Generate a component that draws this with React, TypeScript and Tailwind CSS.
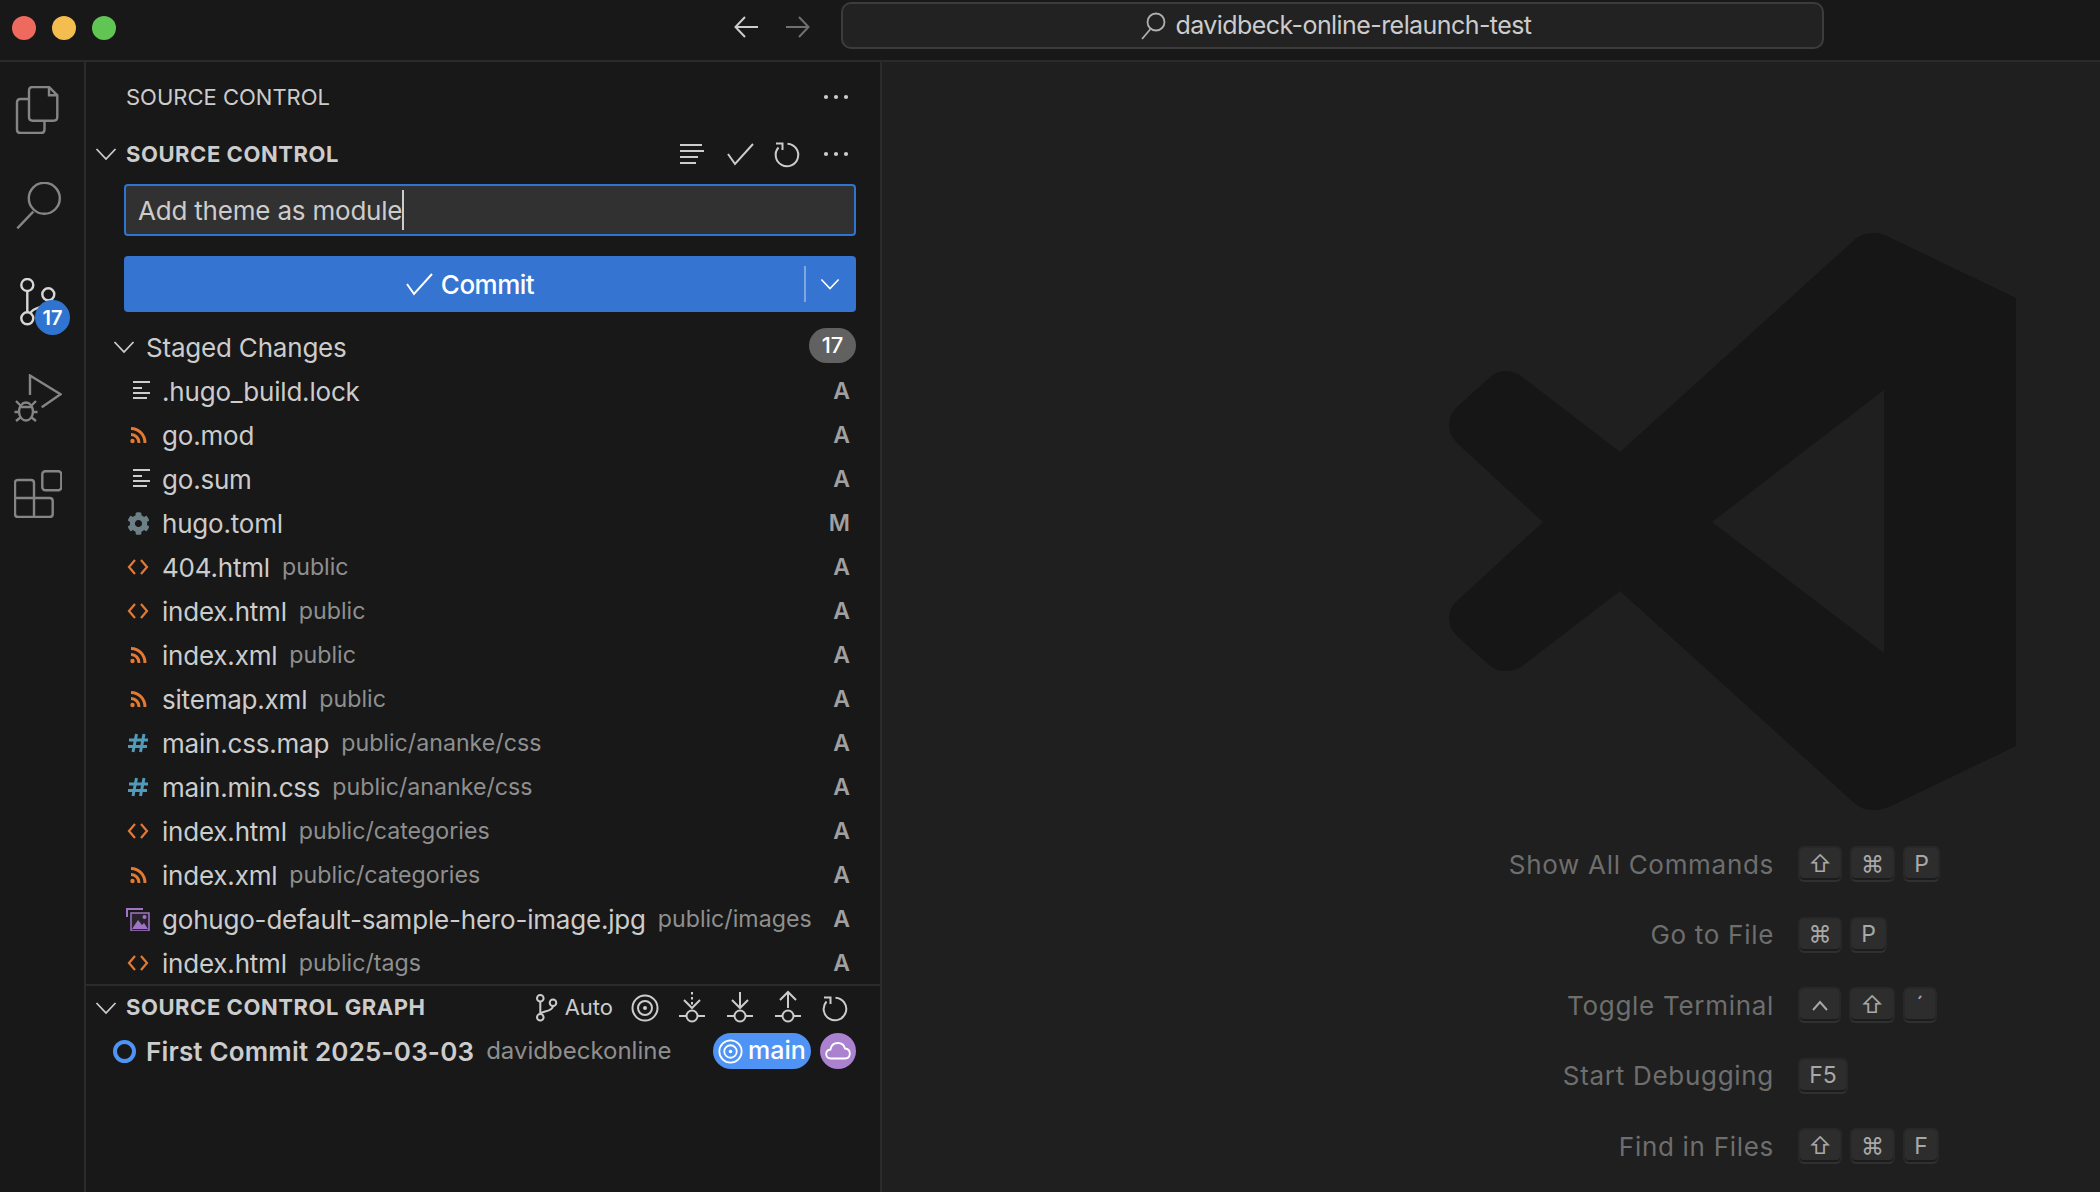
import { FaCog } from "react-icons/fa";

type Kind = "doc" | "rss" | "gear" | "code" | "hash" | "image";

const files: { name: string; dir?: string; kind: Kind; status: string }[] = [
  { name: ".hugo_build.lock", kind: "doc", status: "A" },
  { name: "go.mod", kind: "rss", status: "A" },
  { name: "go.sum", kind: "doc", status: "A" },
  { name: "hugo.toml", kind: "gear", status: "M" },
  { name: "404.html", dir: "public", kind: "code", status: "A" },
  { name: "index.html", dir: "public", kind: "code", status: "A" },
  { name: "index.xml", dir: "public", kind: "rss", status: "A" },
  { name: "sitemap.xml", dir: "public", kind: "rss", status: "A" },
  { name: "main.css.map", dir: "public/ananke/css", kind: "hash", status: "A" },
  { name: "main.min.css", dir: "public/ananke/css", kind: "hash", status: "A" },
  { name: "index.html", dir: "public/categories", kind: "code", status: "A" },
  { name: "index.xml", dir: "public/categories", kind: "rss", status: "A" },
  { name: "gohugo-default-sample-hero-image.jpg", dir: "public/images", kind: "image", status: "A" },
  { name: "index.html", dir: "public/tags", kind: "code", status: "A" },
];

const shortcuts = [
  { label: "Show All Commands", keys: [["⇧", "w-[44px]"], ["⌘", "w-[45px]"], ["P", "w-[37px]"]] },
  { label: "Go to File", keys: [["⌘", "w-[44px]"], ["P", "w-[37px]"]] },
  { label: "Toggle Terminal", keys: [["⌃", "w-[43px]"], ["⇧", "w-[46px]"], ["´", "w-[34px]"]] },
  { label: "Start Debugging", keys: [["F5", "w-[50px]"]] },
  { label: "Find in Files", keys: [["⇧", "w-[44px]"], ["⌘", "w-[45px]"], ["F", "w-[36px]"]] },
];

function FileIcon({ kind }: { kind: Kind }) {
  if (kind === "gear") return <FaCog className="w-[23px] h-[23px] text-[#6d8086]" />;
  if (kind === "doc")
    return (
      <svg width="24" height="24" viewBox="0 0 24 24" stroke="#cccccc" strokeWidth="2">
        <path d="M7 3h17M7 9h9M7 14h17M7 19h14" />
      </svg>
    );
  if (kind === "rss")
    return (
      <svg width="24" height="24" viewBox="0 0 24 24" fill="none" stroke="#e37933" strokeWidth="3">
        <circle cx="6.5" cy="18" r="2.2" fill="#e37933" stroke="none" />
        <path d="M5 11.5c4.5 0 8 3.5 8 8.5M5 5.5c8 0 14 6.5 14 14.500" />
      </svg>
    );
  if (kind === "code")
    return (
      <svg width="24" height="24" viewBox="0 0 24 24" fill="none" stroke="#e37933" strokeWidth="2.2">
        <path d="M9 5l-6 7 6 7M15 5l6 7-6 7" />
      </svg>
    );
  if (kind === "hash")
    return (
      <svg width="24" height="24" viewBox="0 0 24 24" fill="none" stroke="#519aba" strokeWidth="3">
        <path d="M10.500 3L7 21M18 3l-3.500 18M3 9h19M2 15.500h19" />
      </svg>
    );
  return (
    <svg width="24" height="24" viewBox="0 0 24 24" fill="none">
      <path d="M1 10V2h16" stroke="#a074c4" strokeWidth="2" />
      <path d="M5 6h18v18H5z" fill="#a074c4" fillOpacity="0.12" stroke="#a074c4" strokeWidth="1.500" />
      <circle cx="18.500" cy="10" r="2" fill="#a074c4" />
      <path d="M6 22l6-9 4 5 2-2 4 6z" fill="#a074c4" />
    </svg>
  );
}

function Chevron({ className }: { className: string }) {
  return (
    <svg className={className} width="22" height="14" viewBox="0 0 22 14" fill="none" stroke="currentColor" strokeWidth="1.800">
      <path d="M1.500 2l9.500 10 9.500-10" />
    </svg>
  );
}

function Dots() {
  return (
    <svg width="32" height="8" viewBox="0 0 32 8" fill="#cccccc">
      <circle cx="6" cy="4" r="2.100" />
      <circle cx="16" cy="4" r="2.100" />
      <circle cx="26" cy="4" r="2.100" />
    </svg>
  );
}

function Refresh() {
  return (
    <svg width="30" height="30" viewBox="0 0 30 30" fill="none" stroke="#cccccc" strokeWidth="2">
      <path d="M15.500 4.700A11.300 11.300 0 1 1 6.500 8.500" />
      <path d="M4 4.500h6.500V11" />
    </svg>
  );
}

function Target({ size }: { size: number }) {
  return (
    <svg width={size} height={size} viewBox="0 0 28 28" fill="none" stroke="currentColor" strokeWidth="2">
      <circle cx="14" cy="14" r="12.500" />
      <circle cx="14" cy="14" r="7" />
      <circle cx="14" cy="14" r="2" fill="currentColor" stroke="none" />
    </svg>
  );
}

function SyncIcon({ dir }: { dir: "fetch" | "pull" | "push" }) {
  return (
    <svg width="32" height="36" viewBox="0 0 32 36" fill="none" stroke="#cccccc" strokeWidth="2">
      <circle cx="16" cy="26" r="5.500" />
      <path d="M3 26h7.500M21.500 26H29" />
      {dir === "fetch" && <path d="M16 2v14" strokeDasharray="2.500 2.500" />}
      {dir === "pull" && <path d="M16 2v16" />}
      {dir === "push" && <path d="M16 2v16" />}
      {dir === "push" ? <path d="M8 10l8-8 8 8" /> : <path d="M8 10l8 8 8-8" />}
    </svg>
  );
}

function ActivityBar() {
  const iconClass = "w-[48px] h-[48px]";
  return (
    <div className="w-[86px] shrink-0 border-r-2 border-[#2b2b2b] pl-[14px] pt-[24px] flex flex-col gap-[48px]">
      <svg className={iconClass} viewBox="0 0 48 48" fill="none" stroke="#858585" strokeWidth="2.400">
        <path d="M18.500 1H35l8.300 8.300V31q0 3.700-3.700 3.700H18.700q-3.700 0-3.700-3.700V4.700Q15 1 18.500 1z" />
        <path d="M35 1v8.300h8.300" />
        <path d="M15 13H6.500Q3 13 3 16.500V43.500Q3 47 6.500 47H27q3.500 0 3.500-3.500V35" />
      </svg>
      <svg className={iconClass} viewBox="0 0 48 48" fill="none" stroke="#858585" strokeWidth="2.400">
        <circle cx="30.300" cy="16.300" r="15.500" />
        <path d="M19.300 29.700L3.300 46.300" />
      </svg>
      <div className="relative w-[48px] h-[48px]">
        <svg className={iconClass} viewBox="0 0 48 48" fill="none" stroke="#d7d7d7" strokeWidth="2.400">
          <circle cx="13.300" cy="7" r="6" />
          <circle cx="13.300" cy="40.300" r="6" />
          <circle cx="34.300" cy="16.300" r="6" />
          <path d="M13.300 13v21M34.300 22.500c0 8-15 5-18 13" />
        </svg>
        <span className="absolute left-[21px] top-[22px] w-[35px] h-[35px] rounded-full bg-[#2f74d0] flex items-center justify-center text-white text-[20px] font-semibold">
          17
        </span>
      </div>
      <svg className={iconClass} viewBox="0 0 48 48" fill="none" stroke="#858585" strokeWidth="2.400">
        <path d="M16 21V1.500L46.500 20.300 27.700 33.300" />
        <ellipse cx="12" cy="37.500" rx="7" ry="9" />
        <path d="M5.500 33h13M2 27l5 5M22 27l-5 5M0.500 38h5M18.500 38h5M2 47l5-4M22 47l-5-4" />
      </svg>
      <svg className={iconClass} viewBox="0 0 48 48" fill="none" stroke="#858585" strokeWidth="2.400">
        <rect x="28.300" y="1.200" width="19" height="19" rx="3" />
        <path d="M20 28V13q0-3-3-3H4q-3 0-3 3v31q0 3 3 3h31.700q3 0 3-3V31q0-3-3-3H1M20 28v19" />
      </svg>
    </div>
  );
}

function Sidebar() {
  return (
    <div className="w-[796px] shrink-0 border-r-2 border-[#2b2b2b] flex flex-col text-[#cccccc]">
      <div className="h-[70px] flex items-center justify-between pl-[40px] pr-[28px] text-[22px]">
        <span>SOURCE CONTROL</span>
        <Dots />
      </div>

      <div className="h-[44px] flex items-center pl-[9px] pr-[28px]">
        <Chevron className="text-[#cccccc] w-[22px] mr-[9px]" />
        <span className="text-[22px] font-bold tracking-[0.55px]">SOURCE CONTROL</span>
        <div className="ml-auto flex items-center">
          <svg width="26" height="24" viewBox="0 0 26 24" stroke="#cccccc" strokeWidth="2">
            <path d="M1 3h22M1 9h24M1 15h18M1 21h16" />
          </svg>
          <svg className="ml-[21px]" width="28" height="24" viewBox="0 0 28 24" fill="none" stroke="#cccccc" strokeWidth="2">
            <path d="M2 12l7 10L27 2" />
          </svg>
          <div className="ml-[18px]"><Refresh /></div>
          <div className="ml-[18px]"><Dots /></div>
        </div>
      </div>

      <div className="mt-[8px] mx-[38px] mr-[24px] h-[52px] rounded-[4px] border-2 border-[#2f74d0] bg-[#313131] flex items-center px-[12px] text-[26px] tracking-[-0.2px]">
        <span>Add theme as module</span>
        <span className="w-[2px] h-[40px] bg-[#cccccc]" />
      </div>

      <div className="mt-[20px] mx-[38px] mr-[24px] h-[56px] rounded-[4px] bg-[#3574d0] flex items-center text-white">
        <div className="flex-1 flex items-center justify-center gap-[8px] pl-[11px] text-[26px] font-medium tracking-[-0.5px]">
          <svg width="28" height="24" viewBox="0 0 28 24" fill="none" stroke="#ffffff" strokeWidth="2">
            <path d="M2 12l7 10L27 2" />
          </svg>
          <span>Commit</span>
        </div>
        <div className="w-[52px] h-[36px] pr-[2px] border-l-2 border-[#7fa6e0] flex items-center justify-center">
          <Chevron className="text-white w-[20px]" />
        </div>
      </div>

      <div className="mt-[13px] h-[44px] flex items-center pl-[27px] pr-[24px]">
        <Chevron className="text-[#cccccc] w-[22px] mr-[11px]" />
        <span className="text-[26px] tracking-[-0.2px]">Staged Changes</span>
        <span className="ml-auto mb-[3px] w-[47px] h-[35px] rounded-full bg-[#616161] text-white text-[22px] font-medium flex items-center justify-center">
          17
        </span>
      </div>

      {files.map((f, i) => (
        <div key={i} className="h-[44px] shrink-0 flex items-center pl-[40px] pr-[30px]">
          <div className="w-[24px] h-[24px] flex items-center justify-center mr-[12px]">
            <FileIcon kind={f.kind} />
          </div>
          <span className="text-[26px] tracking-[-0.2px]">{f.name}</span>
          {f.dir && <span className="ml-[12px] text-[23.200px] text-[#8f8f8f]">{f.dir}</span>}
          <span className="ml-auto text-[23px] font-semibold text-[#a0a0a0]">{f.status}</span>
        </div>
      ))}

      <div className="border-t-2 border-[#2b2b2b] -mt-[1px] h-[45px] shrink-0 flex items-center pl-[9px] pr-[30px]">
        <Chevron className="text-[#cccccc] w-[22px] mr-[9px]" />
        <span className="text-[22px] font-bold tracking-[0.55px]">SOURCE CONTROL GRAPH</span>
        <div className="ml-auto flex items-center">
          <svg width="28" height="34" viewBox="0 0 28 34" fill="none" stroke="#cccccc" strokeWidth="2">
            <circle cx="7.300" cy="7.300" r="3.300" />
            <circle cx="7.300" cy="26.300" r="3.300" />
            <circle cx="20" cy="11.700" r="3.300" />
            <path d="M7.300 10.600v12.400M20 15c0 6-12 5-12.700 8" />
          </svg>
          <span className="text-[22px] ml-[4px]">Auto</span>
          <div className="ml-[18px]"><Target size={28} /></div>
          <div className="ml-[17px]"><SyncIcon dir="fetch" /></div>
          <div className="ml-[16px]"><SyncIcon dir="pull" /></div>
          <div className="ml-[16px]"><SyncIcon dir="push" /></div>
          <div className="ml-[16px]"><Refresh /></div>
        </div>
      </div>

      <div className="h-[44px] shrink-0 flex items-center pl-[27px] pr-[24px]">
        <span className="w-[23px] h-[23px] rounded-full border-[4px] border-[#4f94f5] shrink-0" />
        <span className="ml-[10px] text-[26px] font-semibold tracking-[0.17px]">First Commit 2025-03-03</span>
        <span className="ml-[12px] text-[24px] text-[#8f8f8f]">davidbeckonline</span>
        <span className="ml-auto h-[36px] w-[98px] rounded-full bg-[#4f94f5] text-white flex items-center pl-[5px] gap-[5px] text-[25px] font-medium">
          <Target size={25} />
          main
        </span>
        <span className="ml-[9px] w-[36px] h-[36px] rounded-full bg-[#aa82d0] flex items-center justify-center">
          <svg width="26" height="20" viewBox="0 0 26 20" fill="none" stroke="#ffffff" strokeWidth="1.800">
            <path d="M6 17.500Q1.200 17.500 1.200 13 1.200 9 5.500 8.500 6.500 2 13 2q5.500 0 7 5.500 4.800.5 4.800 5 0 5-4.800 5z" />
          </svg>
        </span>
      </div>
    </div>
  );
}

function Editor() {
  return (
    <div className="flex-1 bg-[#1f1f1f] pt-[171px] pl-[567px] flex flex-col">
      <svg className="shrink-0" width="567" height="577" viewBox="0 0 567 577" fill="#161616" fillRule="evenodd">
        <path d="M424 0Q434 0 442 5L567 65V513L442 573Q434 577 424 577Q411 577 402 567L171 358L72 434Q65 438 56 438Q47 438 40 432L8 403Q0 395 0 385Q0 375 8 368L94 289L8 210Q0 202 0 192Q0 182 8 174L40 145Q47 138 56 138Q65 138 72 143L171 219L402 10Q411 0 424 0ZM435 157L263 289L435 420Z" />
      </svg>
      <div className="-ml-[567px] pl-[108px] mt-[36px] flex flex-col gap-[34.500px]">
        {shortcuts.map((s) => (
          <div key={s.label} className="flex items-center h-[36px]">
            <span className="w-[784px] text-right text-[26px] tracking-[0.7px] text-[#6e6e6e]">{s.label}</span>
            <div className="ml-[24px] flex gap-[8px]">
              {s.keys.map(([k, w], i) => (
                <span
                  key={i}
                  className={`${w} h-[36px] rounded-[6px] bg-[#2d2d2d] border-2 border-[#282828] border-b-[#303030] shadow-[inset_0_-2px_0_rgba(0,0,0,0.36)] flex items-center justify-center text-[23px] text-[#a8a8a8] font-['Inter','DejaVu_Sans',sans-serif]`}
                >
                  {k === "⌃" ? (
                    <svg width="18" height="12" viewBox="0 0 18 12" fill="none" stroke="#a8a8a8" strokeWidth="2">
                      <path d="M2 11l7-8 7 8" />
                    </svg>
                  ) : (
                    k
                  )}
                </span>
              ))}
            </div>
          </div>
        ))}
      </div>
    </div>
  );
}

export default function App() {
  return (
    <div className="w-screen h-screen overflow-hidden flex flex-col bg-[#181818] font-['Inter',sans-serif]">
      <div className="h-[62px] shrink-0 border-b-2 border-[#2b2b2b] flex items-start">
        <div className="flex gap-[16px] pl-[12px] pt-[16px]">
          <span className="w-[24px] h-[24px] rounded-full bg-[#ee6a5f]" />
          <span className="w-[24px] h-[24px] rounded-full bg-[#f5bd4f]" />
          <span className="w-[24px] h-[24px] rounded-full bg-[#61c554]" />
        </div>
        <div className="ml-[618px] mt-[16px] flex gap-[26px]">
          <svg width="25" height="22" viewBox="0 0 25 22" fill="none" stroke="#cccccc" strokeWidth="2">
            <path d="M24 11H2M11 1L1.500 11l9.500 10" />
          </svg>
          <svg width="25" height="22" viewBox="0 0 25 22" fill="none" stroke="#707070" strokeWidth="2">
            <path d="M1 11h22M14 1l9.500 10L14 21" />
          </svg>
        </div>
        <div className="ml-[31px] mt-[2px] w-[983px] h-[47px] rounded-[10px] border-2 border-[#3c3c3c] bg-[#222222] flex items-center justify-center pl-[6px] text-[#cccccc] text-[25px] tracking-[-0.57px] gap-[10px]">
          <svg width="26" height="28" viewBox="0 0 26 28" fill="none" stroke="#b0b0b0" strokeWidth="1.800">
            <circle cx="16" cy="10" r="8.500" />
            <path d="M10.500 17L2 27" />
          </svg>
          <span>davidbeck-online-relaunch-test</span>
        </div>
      </div>
      <div className="flex-1 flex min-h-0">
        <ActivityBar />
        <Sidebar />
        <Editor />
      </div>
    </div>
  );
}
